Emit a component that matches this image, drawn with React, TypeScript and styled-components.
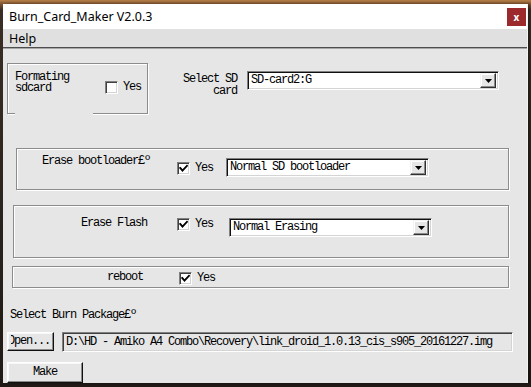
import React from "react";
import styled, { createGlobalStyle } from "styled-components";

const mono = `"Liberation Mono", "DejaVu Sans Mono", monospace`;
const ui = `"Noto Sans", "Liberation Sans", sans-serif`;
const face = "#e6e6e6";

const Global = createGlobalStyle`
  html, body { margin: 0; padding: 0; }
  body {
    width: 531px;
    height: 387px;
    overflow: hidden;
    background: linear-gradient(180deg, #b8804a 0px, #8a5c34 3px, #3a2e24 10px, #2a231d 60%, #1f1a16 100%);
  }
`;

const Window = styled.div`
  margin: 4px 0 0 3px;
  width: 524px;
  height: 379px;
  display: flex;
  flex-direction: column;
  background: ${face};
  box-shadow: 1px 0 0 #f2f2f2, 3px 0 2px rgba(0, 0, 0, 0.35);
`;

const TitleBar = styled.div`
  height: 26px;
  box-sizing: border-box;
  background: #ffffff;
  display: flex;
  align-items: center;
  justify-content: space-between;
  padding: 0 1px 0 6px;
  font: 12.5px ${ui};
  color: #000;
`;

const CloseButton = styled.div`
  width: 19px;
  height: 18px;
  margin-top: 1px;
  background: #9c2a2c;
  color: #fff;
  display: flex;
  align-items: center;
  justify-content: center;
  font: bold 10px ${ui};
`;

const MenuBar = styled.div`
  height: 19px;
  box-sizing: border-box;
  background: #e0e0e0;
  display: flex;
  align-items: center;
  padding-left: 6px;
  font: 12.5px ${ui};
  color: #000;
  border-bottom: 1px solid #4e4e4e;
  box-shadow: 0 1px 0 #a6a6a6;
`;

const Client = styled.div`
  flex: 1;
  display: flex;
  flex-direction: column;
  margin-top: 1px;
  font: 12px ${mono};
  letter-spacing: -1.2px;
  color: #000;
`;

const Row = styled.div<{ $mt: number; $ml?: number }>`
  display: flex;
  align-items: flex-start;
  margin-top: ${(p) => p.$mt}px;
  padding-left: ${(p) => p.$ml ?? 0}px;
`;

const Group = styled.div<{ $ml: number; $w: number; $h: number; $mt?: number; $pl: number }>`
  position: relative;
  box-sizing: border-box;
  margin-left: ${(p) => p.$ml}px;
  margin-top: ${(p) => p.$mt ?? 0}px;
  width: ${(p) => p.$w}px;
  height: ${(p) => p.$h}px;
  padding-left: ${(p) => p.$pl}px;
  display: flex;
  align-items: flex-start;
  flex-shrink: 0;
  border: 1px solid #8c8c8c;
  box-shadow: inset 1px 1px 0 #ffffff, 1px 1px 0 #ffffff;
`;

const FormatGroup = styled(Group)`
  &::after {
    content: "";
    position: absolute;
    left: 7px;
    bottom: -2px;
    width: 78px;
    height: 3px;
    background: ${face};
  }
`;

const Label = styled.div<{ $w?: number; $mt: number; $ml?: number; $right?: boolean; $lh?: number }>`
  width: ${(p) => (p.$w ? `${p.$w}px` : "auto")};
  margin-top: ${(p) => p.$mt}px;
  margin-left: ${(p) => p.$ml ?? 0}px;
  line-height: ${(p) => p.$lh ?? 12}px;
  white-space: pre;
  text-align: ${(p) => (p.$right ? "right" : "left")};
  flex-shrink: 0;
`;

const CheckBox = styled.div<{ $mt: number }>`
  width: 13px;
  height: 13px;
  box-sizing: border-box;
  margin-top: ${(p) => p.$mt}px;
  background: #fff;
  border-top: 1px solid #808080;
  border-left: 1px solid #808080;
  border-right: 1px solid #ffffff;
  border-bottom: 1px solid #ffffff;
  box-shadow: inset 1px 1px 0 #404040, inset -1px -1px 0 #d4d4d4;
  display: flex;
  align-items: center;
  justify-content: center;
  flex-shrink: 0;
`;

const CheckText = styled.div<{ $mt: number }>`
  margin-left: 5px;
  margin-top: ${(p) => p.$mt}px;
  line-height: 13px;
`;

const Combo = styled.div<{ $ml: number; $mt: number; $w: number }>`
  margin-left: ${(p) => p.$ml}px;
  margin-top: ${(p) => p.$mt}px;
  width: ${(p) => p.$w}px;
  height: 19px;
  box-sizing: border-box;
  background: #fff;
  border-top: 1px solid #808080;
  border-left: 1px solid #808080;
  border-right: 1px solid #ffffff;
  border-bottom: 1px solid #ffffff;
  box-shadow: inset 1px 1px 0 #101010, inset -1px -1px 0 #d4d4d4;
  display: flex;
  align-items: center;
  justify-content: space-between;
  padding: 0 2px 0 3px;
  flex-shrink: 0;
`;

const ComboText = styled.span`
  line-height: 13px;
  white-space: pre;
`;

const ArrowButton = styled.div`
  width: 16px;
  height: 15px;
  box-sizing: border-box;
  background: ${face};
  border-top: 1px solid #f4f4f4;
  border-left: 1px solid #f4f4f4;
  border-right: 1px solid #303030;
  border-bottom: 1px solid #303030;
  box-shadow: inset -1px -1px 0 #8a8a8a, inset 1px 1px 0 #ffffff;
  display: flex;
  align-items: center;
  justify-content: center;
`;

const PushButton = styled.div<{ $w: number; $h: number; $center?: boolean }>`
  width: ${(p) => p.$w}px;
  height: ${(p) => p.$h}px;
  box-sizing: border-box;
  background: ${face};
  border-top: 1px solid #ffffff;
  border-left: 1px solid #ffffff;
  border-right: 1px solid #101010;
  border-bottom: 1px solid #101010;
  box-shadow: inset -1px -1px 0 #8a8a8a, inset 1px 1px 0 #f8f8f8;
  display: flex;
  align-items: center;
  justify-content: ${(p) => (p.$center ? "center" : "flex-start")};
  flex-shrink: 0;
  line-height: 13px;
`;

const ClipText = styled.span`
  display: block;
  overflow: hidden;
  margin-left: 3px;
  text-indent: -3px;
  white-space: pre;
`;

const PathField = styled.div`
  margin-left: 8px;
  width: 451px;
  height: 20px;
  box-sizing: border-box;
  background: ${face};
  border-top: 1px solid #808080;
  border-left: 1px solid #808080;
  border-right: 1px solid #ffffff;
  border-bottom: 1px solid #ffffff;
  box-shadow: inset 1px 1px 0 #404040, inset -1px -1px 0 #d4d4d4;
  display: flex;
  align-items: center;
  padding-left: 3px;
  white-space: pre;
  overflow: hidden;
  line-height: 13px;
`;

const Arrow = () => (
  <svg width="7" height="4" viewBox="0 0 7 4">
    <polygon points="0,0 7,0 3.5,4" fill="#000" />
  </svg>
);

const Tick = () => (
  <svg width="9" height="9" viewBox="0 0 9 9">
    <polyline points="1.2,4 3.5,6.6 8,1.8" fill="none" stroke="#000" strokeWidth="1.9" strokeLinecap="square" />
  </svg>
);

const Check = ({ checked, mt }: { checked: boolean; mt: number }) => (
  <>
    <CheckBox $mt={mt}>{checked ? <Tick /> : null}</CheckBox>
    <CheckText $mt={mt}>Yes</CheckText>
  </>
);

export default function App() {
  return (
    <>
      <Global />
      <Window>
        <TitleBar>
          <span>Burn_Card_Maker V2.0.3</span>
          <CloseButton>x</CloseButton>
        </TitleBar>
        <MenuBar>Help</MenuBar>
        <Client>
          <Row $mt={14}>
            <FormatGroup $ml={4} $w={141} $h={51} $pl={7}>
              <Label $w={90} $mt={8} $lh={11}>{"Formating\nsdcard"}</Label>
              <Check checked={false} mt={17} />
            </FormatGroup>
            <Label $w={60} $ml={29} $mt={10} $right>{"Select SD\ncard"}</Label>
            <Combo $ml={10} $mt={8} $w={252}>
              <ComboText>SD-card2:G</ComboText>
              <ArrowButton>
                <Arrow />
              </ArrowButton>
            </Combo>
          </Row>

          <Group $ml={13} $mt={34} $w={493} $h={42} $pl={25}>
            <Label $w={135} $mt={6}>Erase bootloader£º</Label>
            <Check checked mt={13} />
            <Combo $ml={13} $mt={9} $w={203}>
              <ComboText>Normal SD bootloader</ComboText>
              <ArrowButton>
                <Arrow />
              </ArrowButton>
            </Combo>
          </Group>

          <Group $ml={10} $mt={15} $w={496} $h={53} $pl={67}>
            <Label $w={96} $mt={11}>Erase Flash</Label>
            <Check checked mt={12} />
            <Combo $ml={16} $mt={12} $w={203}>
              <ComboText>Normal Erasing</ComboText>
              <ArrowButton>
                <Arrow />
              </ArrowButton>
            </Combo>
          </Group>

          <Group $ml={9} $mt={8} $w={497} $h={22} $pl={94}>
            <Label $w={72} $mt={4}>reboot</Label>
            <Check checked mt={5} />
          </Group>

          <Label $ml={7} $mt={21}>Select Burn Package£º</Label>

          <Row $mt={11} $ml={4}>
            <PushButton $w={47} $h={19}>
              <ClipText>Open...</ClipText>
            </PushButton>
            <PathField>D:\HD - Amiko A4 Combo\Recovery\link_droid_1.0.13_cis_s905_20161227.img</PathField>
          </Row>

          <Row $mt={10} $ml={4}>
            <PushButton $w={76} $h={21} $center>
              Make
            </PushButton>
          </Row>
        </Client>
      </Window>
    </>
  );
}
